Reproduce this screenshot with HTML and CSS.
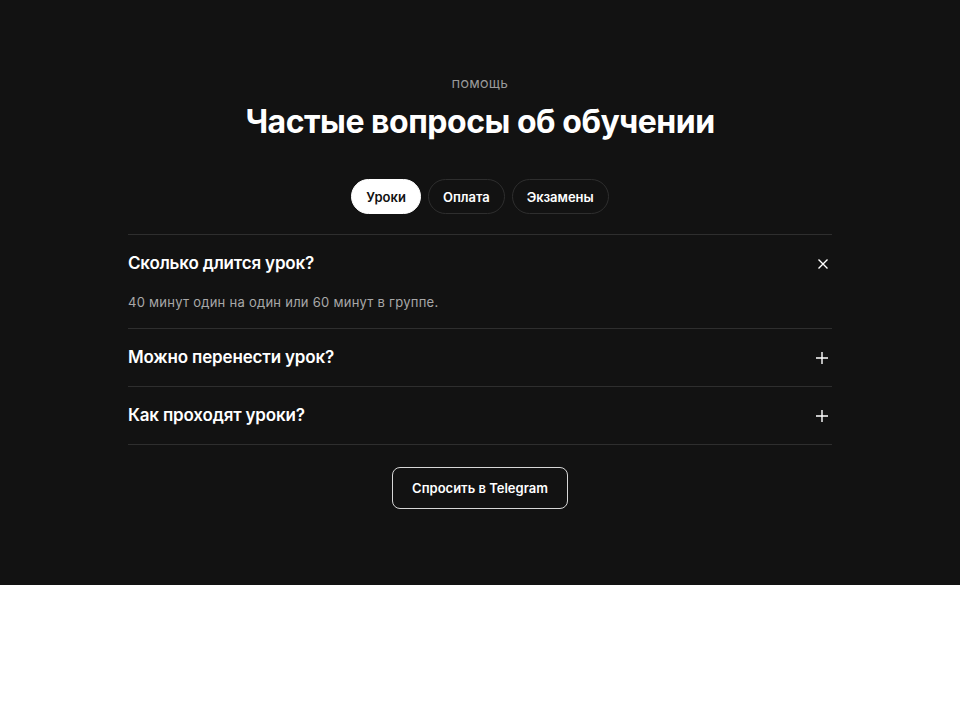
FILE: index.html
```
<!DOCTYPE html>
<html lang="ru">
<head>
<meta charset="utf-8">
<link rel="stylesheet" href="styles.css">
</head>
<body>
<section class="faq">
  <div class="inner">
    <div class="eyebrow">ПОМОЩЬ</div>
    <h2 class="title">Частые вопросы об обучении</h2>
    <div class="tabs">
      <button class="tab active">Уроки</button>
      <button class="tab">Оплата</button>
      <button class="tab">Экзамены</button>
    </div>
    <div class="list">
      <div class="item open">
        <div class="q"><span>Сколько длится урок?</span>
          <svg class="ico" width="12" height="12" viewBox="0 0 12 12"><path d="M1.5 1.5L10.5 10.5M10.5 1.5L1.5 10.5" stroke="#fff" stroke-width="1.4" fill="none"/></svg>
        </div>
        <div class="a">40 минут один на один или 60 минут в группе.</div>
      </div>
      <div class="item">
        <div class="q"><span>Можно перенести урок?</span>
          <svg class="ico" width="14" height="14" viewBox="0 0 14 14"><path d="M7 1V13M1 7H13" stroke="#fff" stroke-width="1.4" fill="none"/></svg>
        </div>
      </div>
      <div class="item">
        <div class="q"><span>Как проходят уроки?</span>
          <svg class="ico" width="14" height="14" viewBox="0 0 14 14"><path d="M7 1V13M1 7H13" stroke="#fff" stroke-width="1.4" fill="none"/></svg>
        </div>
      </div>
    </div>
    <div class="cta-wrap"><button class="cta">Спросить в Telegram</button></div>
  </div>
</section>
</body>
</html>
```
FILE: styles.css
```
* { box-sizing: border-box; }
body {
  margin: 0;
  background: #fff;
  font-family: Inter, "Noto Sans", sans-serif;
}
.faq {
  background: #121212;
  color: #fff;
  padding: 76px 0 76px;
}
.inner {
  width: 704px;
  margin: 0 auto;
}
.eyebrow {
  text-align: center;
  font-size: 11px;
  line-height: 16px;
  letter-spacing: 0.05em;
  color: #9a9a9a;
  font-weight: 500;
}
.title {
  margin: 10px 0 0;
  text-align: center;
  font-size: 32px;
  line-height: 40px;
  font-weight: 700;
  letter-spacing: -0.015em;
}
.tabs {
  display: flex;
  justify-content: center;
  gap: 7px;
  margin-top: 37px;
}
.tab {
  height: 35px;
  padding: 0 14px;
  border-radius: 18px;
  border: 1px solid #2e2e2e;
  background: transparent;
  color: #fff;
  font-family: inherit;
  font-size: 13px;
  font-weight: 600;
}
.tab.active {
  background: #fff;
  color: #111;
  border-color: #fff;
}
.list {
  margin-top: 20px;
  border-top: 1px solid #2e2e2e;
}
.item {
  border-bottom: 1px solid #2e2e2e;
}
.q {
  display: flex;
  justify-content: space-between;
  align-items: center;
  padding: 17px 2px 17px 0;
  font-size: 17px;
  line-height: 23px;
  font-weight: 600;
  letter-spacing: -0.01em;
}
.q .ico { margin-right: 1px; }
.a {
  font-size: 13px;
  line-height: 20px;
  color: #a8a8a8;
  padding: 0 0 16px;
  letter-spacing: 0.02em;
}
.cta-wrap {
  display: flex;
  justify-content: center;
  margin-top: 22px;
}
.cta {
  width: 176px;
  height: 42px;
  border: 1px solid #d6d6d6;
  border-radius: 8px;
  background: transparent;
  color: #fff;
  font-family: inherit;
  font-size: 13px;
  font-weight: 600;
}
```
